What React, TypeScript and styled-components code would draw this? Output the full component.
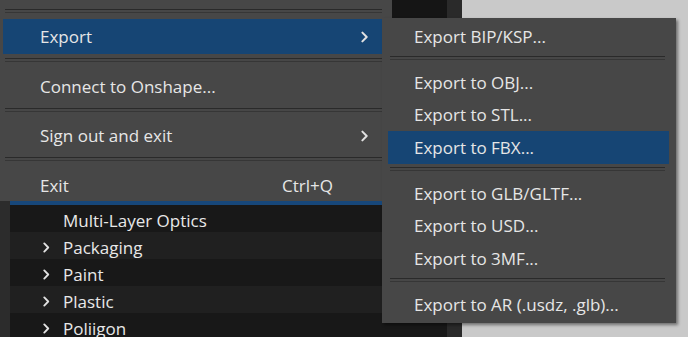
import styled, { createGlobalStyle } from 'styled-components'

const GlobalStyle = createGlobalStyle`
  html, body {
    margin: 0;
    padding: 0;
    background: #c9c9c9;
  }
  * {
    box-sizing: border-box;
  }
`

const Page = styled.div`
  position: relative;
  width: 688px;
  height: 337px;
  overflow: hidden;
  display: flex;
  font-family: 'Open Sans', 'Noto Sans', sans-serif;
`

const LeftPanel = styled.div`
  width: 447px;
  display: flex;
  background: #151515;
`

const Gutter = styled.div`
  width: 10px;
  background: #2c2c2c;
`

const Tree = styled.div`
  flex: 1;
  display: flex;
  flex-direction: column;
  padding-top: 178px;
`

const Row = styled.div<{ $tone: 'selected' | 'dark' | 'light' }>`
  height: 27px;
  flex-shrink: 0;
  display: flex;
  align-items: center;
  padding: 4px 0 0 33px;
  gap: 13px;
  font-size: 17px;
  color: #e8e8e8;
  background: ${(p) =>
    p.$tone === 'selected' ? '#17477a' : p.$tone === 'light' ? '#202020' : '#181818'};
`

const RowArrow = styled.span<{ $hidden?: boolean }>`
  width: 7px;
  display: flex;
  visibility: ${(p) => (p.$hidden ? 'hidden' : 'visible')};
`

const Scrollbar = styled.div`
  width: 15px;
  background: #2a2a2a;
`

const Viewport = styled.div`
  flex: 1;
  background: #c9c9c9;
`

const MainMenu = styled.div`
  position: absolute;
  left: 0;
  top: 0;
  width: 392px;
  height: 201px;
  padding: 4.5px 10px 0 3px;
  background: #474747;
  display: flex;
  flex-direction: column;
`

const SubMenu = styled.div`
  position: absolute;
  left: 382px;
  top: 18px;
  width: 294px;
  padding: 2px 7px 2px 6px;
  background: #474747;
  box-shadow: 2px 2px 3px rgba(0, 0, 0, 0.45);
  display: flex;
  flex-direction: column;
`

const Item = styled.div<{ $active?: boolean; $size: 'main' | 'sub' }>`
  height: ${(p) => (p.$size === 'main' ? '35px' : '32.5px')};
  flex-shrink: 0;
  display: flex;
  align-items: center;
  padding: ${(p) => (p.$size === 'main' ? '0 14px 0 37px' : '0 0 0 26px')};
  font-size: 17px;
  color: #e6e6e6;
  background: ${(p) => (p.$active ? '#164574' : 'transparent')};
  white-space: nowrap;
`

const Label = styled.span`
  flex: 1;
`

const Shortcut = styled.span`
  margin-right: 35px;
`

const Separator = styled.div<{ $size: 'main' | 'sub' }>`
  height: ${(p) => (p.$size === 'main' ? '14.5px' : '13.5px')};
  flex-shrink: 0;
  padding: ${(p) => (p.$size === 'main' ? '4px 0 0 2px' : '3px 4px 0 2px')};

  &::before {
    content: '';
    display: block;
    height: 2px;
    border-top: 1px solid #2a2a2a;
    border-bottom: 1px solid #363636;
  }
`

const Chevron = ({ size = 12 }: { size?: number }) => (
  <svg width={size * 0.6} height={size} viewBox="0 0 7 12" fill="none">
    <polyline
      points="1.3,1.6 5.6,6 1.3,10.4"
      stroke="#e2e2e2"
      strokeWidth="2"
      strokeLinecap="round"
      strokeLinejoin="round"
    />
  </svg>
)

const treeRows = [
  { label: '', tone: 'selected' as const, arrow: false },
  { label: 'Multi-Layer Optics', tone: 'dark' as const, arrow: false },
  { label: 'Packaging', tone: 'light' as const, arrow: true },
  { label: 'Paint', tone: 'dark' as const, arrow: true },
  { label: 'Plastic', tone: 'light' as const, arrow: true },
  { label: 'Poliigon', tone: 'dark' as const, arrow: true },
]

const exportItems = [
  ['Export BIP/KSP...'],
  ['Export to OBJ...', 'Export to STL...', 'Export to FBX...'],
  ['Export to GLB/GLTF...', 'Export to USD...', 'Export to 3MF...'],
  ['Export to AR (.usdz, .glb)...'],
]

const App = () => {
  return (
    <Page>
      <GlobalStyle />
      <LeftPanel>
        <Gutter />
        <Tree>
          {treeRows.map((r, i) => (
            <Row key={i} $tone={r.tone}>
              <RowArrow $hidden={!r.arrow}>
                <Chevron size={11} />
              </RowArrow>
              {r.label}
            </Row>
          ))}
        </Tree>
      </LeftPanel>
      <Scrollbar />
      <Viewport />

      <MainMenu>
        <Separator $size="main" />
        <Item $size="main" $active>
          <Label>Export</Label>
          <Chevron />
        </Item>
        <Separator $size="main" />
        <Item $size="main">
          <Label>Connect to Onshape...</Label>
        </Item>
        <Separator $size="main" />
        <Item $size="main">
          <Label>Sign out and exit</Label>
          <Chevron />
        </Item>
        <Separator $size="main" />
        <Item $size="main">
          <Label>Exit</Label>
          <Shortcut>Ctrl+Q</Shortcut>
        </Item>
      </MainMenu>

      <SubMenu>
        {exportItems.map((group, gi) => (
          <div key={gi} style={{ display: 'contents' }}>
            {gi > 0 && <Separator $size="sub" />}
            {group.map((label) => (
              <Item key={label} $size="sub" $active={label === 'Export to FBX...'}>
                {label}
              </Item>
            ))}
          </div>
        ))}
      </SubMenu>
    </Page>
  )
}

export default App
